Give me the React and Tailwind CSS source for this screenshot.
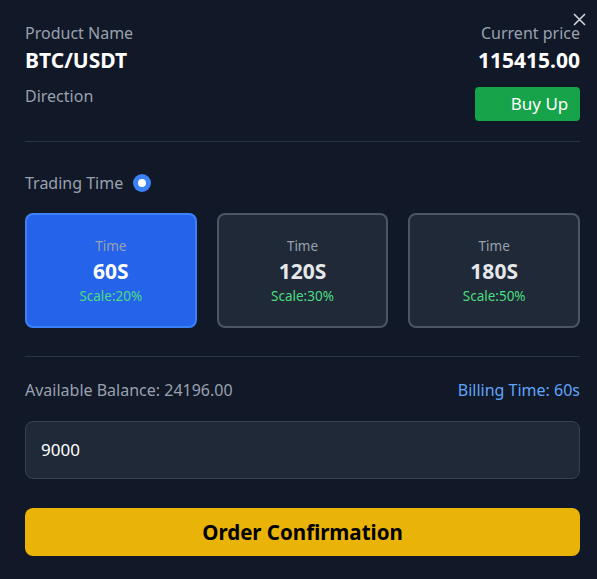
import React from "react";

const cards = [
  { t: "60S", s: "Scale:20%", active: true },
  { t: "120S", s: "Scale:30%" },
  { t: "180S", s: "Scale:50%" },
];

export default function App() {
  return (
    <div className="relative w-[597px] h-[579px] bg-[#111827] pl-[25px] pr-[17px] pt-[22px] font-['Noto_Sans',sans-serif] text-[16px]">
      <button className="absolute right-[10px] top-[12px] text-gray-300">
        <svg width="15" height="15" viewBox="0 0 15 15" fill="none" stroke="currentColor" strokeWidth="1.6">
          <path d="M2 2L13 13M13 2L2 13" />
        </svg>
      </button>
      <div className="flex justify-between">
        <div className="flex flex-col">
          <span className="text-gray-400 leading-[22px]">Product Name</span>
          <span className="text-white font-bold text-[21px] leading-[30px] mt-[1px]">BTC/USDT</span>
          <span className="text-gray-400 leading-[22px] mt-[10px]">Direction</span>
        </div>
        <div className="flex flex-col items-end">
          <span className="text-gray-400 leading-[22px]">Current price</span>
          <span className="text-white font-bold text-[21px] leading-[30px] mt-[1px]">115415.00</span>
          <div className="mt-[12px] w-[105px] h-[34px] rounded bg-[#16a34a] text-white text-[17px] flex items-center justify-center pl-[24px]">
            Buy Up
          </div>
        </div>
      </div>
      <div className="mt-[20px] h-px bg-[#2a3441]" />
      <div className="mt-[30px] flex items-center gap-[10px] text-gray-400 leading-[22px]">
        <span>Trading Time</span>
        <span className="w-[18px] h-[18px] rounded-full bg-[#3b82f6] flex items-center justify-center">
          <span className="w-[8px] h-[8px] rounded-full bg-white" />
        </span>
      </div>
      <div className="mt-[19px] grid grid-cols-3 gap-[20px]">
        {cards.map((c) => (
          <div
            key={c.t}
            className={
              c.active
                ? "h-[115px] rounded-lg border-2 border-[#3b82f6] bg-[#2563eb] flex flex-col items-center justify-center"
                : "h-[115px] rounded-lg border-2 border-[#4b5563] bg-[#1f2937] flex flex-col items-center justify-center"
            }
          >
            <span className="text-[13.5px] text-gray-400 leading-[18px]">Time</span>
            <span className={c.active ? "text-[21px] font-bold text-white leading-[30px] mt-[1px]" : "text-[21px] font-bold text-gray-200 leading-[30px] mt-[1px]"}>{c.t}</span>
            <span className="text-[13.5px] text-[#4ade80] leading-[18px] mt-[1px]">{c.s}</span>
          </div>
        ))}
      </div>
      <div className="mt-[28px] h-px bg-[#2a3441]" />
      <div className="mt-[22px] flex justify-between leading-[22px]">
        <span className="text-gray-400">Available Balance: 24196.00</span>
        <span className="text-[#60a5fa]">Billing Time: 60s</span>
      </div>
      <div className="mt-[20px] h-[58px] rounded-lg border border-[#374151] bg-[#1f2937] flex items-center px-[15px] text-white text-[17px]">
        9000
      </div>
      <div className="mt-[29px] h-[48px] rounded-lg bg-[#eab308] flex items-center justify-center text-black font-bold text-[20.5px]">
        Order Confirmation
      </div>
    </div>
  );
}
